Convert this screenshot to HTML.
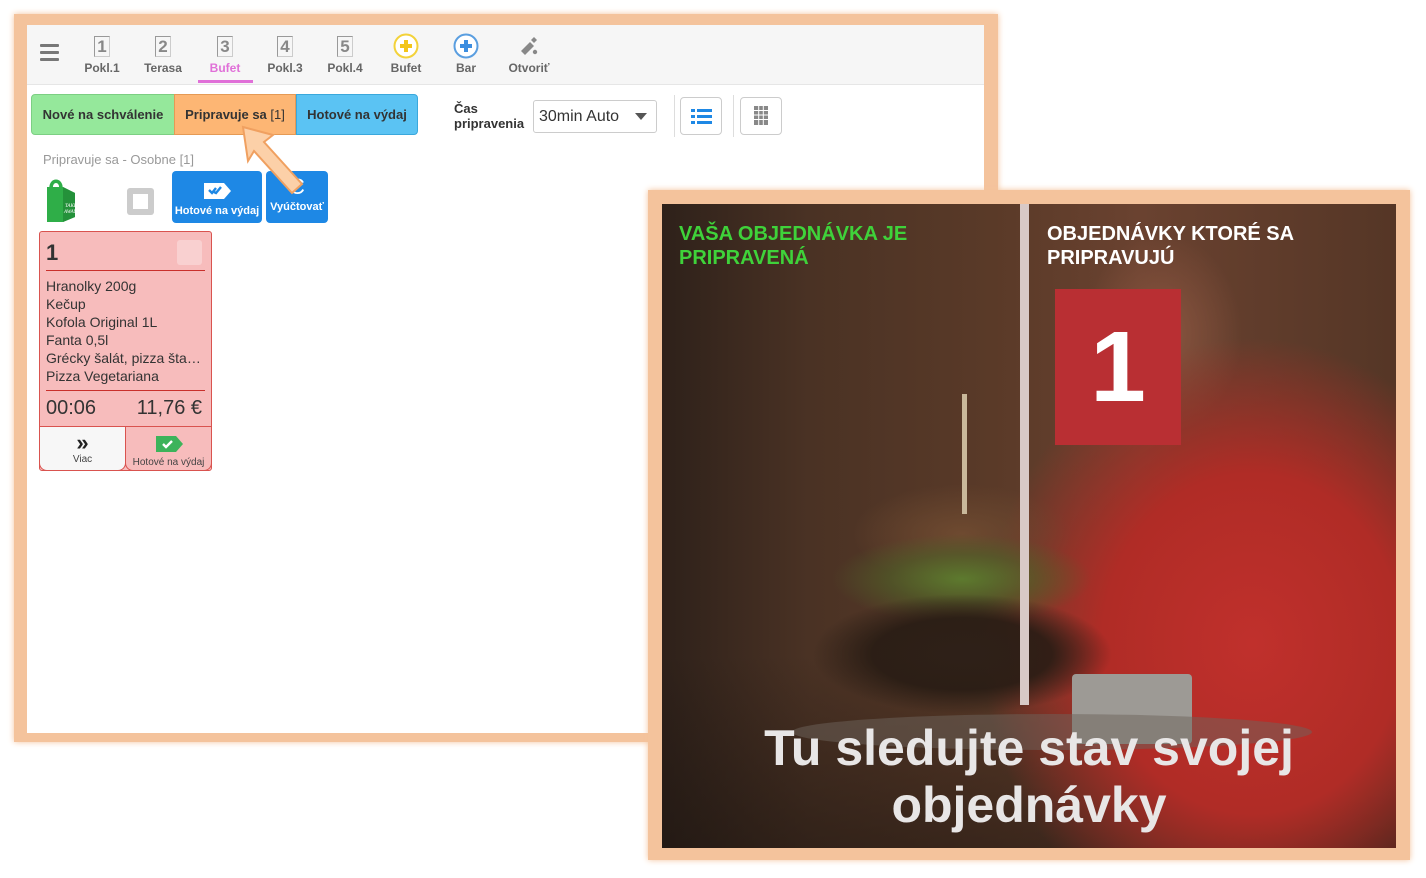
<!DOCTYPE html>
<html><head><meta charset="utf-8"><style>
*{box-sizing:border-box;margin:0;padding:0}
body{width:1426px;height:878px;background:#fff;position:relative;overflow:hidden;font-family:"Liberation Sans",Arial,sans-serif}
.frameL{position:absolute;left:14px;top:14px;width:984px;height:728px;background:#f4c39c;box-shadow:0 0 6px #f4c39c}
.app{position:absolute;left:27px;top:25px;width:957px;height:708px;background:#fff}
.topbar{position:absolute;left:0;top:0;width:957px;height:60px;background:#f6f6f6;border-bottom:1px solid #e6e6e6}
.ham{position:absolute;left:13px;top:19px;width:19px}
.ham i{display:block;height:3px;background:#777;margin-bottom:4px;border-radius:1px}
.tab{position:absolute;top:10px;width:60px;text-align:center;font-size:12px;color:#666;font-weight:bold}
.tab .ic{height:22px;display:flex;justify-content:center;align-items:center;margin-bottom:4px}
.num{font-size:17px;color:#888;border-left:1px solid #999;border-top:1px solid #999;border-right:1px solid #ccc;border-bottom:1px solid #ccc;width:16px;height:21px;line-height:20px;text-align:center;font-weight:bold}
.sel{color:#e070d8}
.uline{position:absolute;left:171px;top:55px;width:55px;height:3px;background:#e070d8}
.btn{position:absolute;top:69px;height:41px;line-height:40px;font-size:13px;color:#333;text-align:center;border:1px solid}
.b1{left:4px;width:144px;background:#95e89b;border-color:#7ccf83;border-radius:4px 0 0 4px;font-weight:bold}
.b2{left:147px;width:122px;background:#fdb674;border-color:#e59a55}
.b3{left:269px;width:122px;background:#5bc3f3;border-color:#3aa8dc;border-radius:0 4px 4px 0;font-weight:bold}
.cas{position:absolute;left:427px;top:76px;font-size:13px;color:#333;line-height:15px;font-weight:bold}
.selbox{position:absolute;left:506px;top:75px;width:124px;height:33px;border:1px solid #ccc;border-radius:3px;font-size:16px;color:#333;line-height:31px;padding-left:5px;background:#fff}
.selbox:after{content:"";position:absolute;right:9px;top:12px;border:6px solid transparent;border-top:7px solid #555}
.vsep{position:absolute;top:70px;width:1px;height:42px;background:#ddd}
.ibtn{position:absolute;top:72px;width:42px;height:38px;border:1px solid #ccc;border-radius:4px;background:#fff}
.sub{position:absolute;left:16px;top:127px;font-size:13px;color:#999}
.bluebtn{position:absolute;top:146px;height:52px;background:#1e88e5;border-radius:4px;color:#fff;font-size:11px;font-weight:bold;text-align:center}
.card{position:absolute;left:12px;top:206px;width:173px;height:240px;background:#f7bcbc;border:1px solid #d9534f;border-radius:3px}
.card .n{position:absolute;left:6px;top:8px;font-size:22px;color:#333;font-weight:bold}
.card .chk{position:absolute;right:9px;top:8px;width:25px;height:25px;background:#f9d0d0;border-radius:3px}
.card .hr{position:absolute;left:6px;right:6px;height:1px;background:#c9302c}
.items{position:absolute;left:6px;top:45px;font-size:14px;color:#333;line-height:18px}
.time{position:absolute;left:6px;top:165px;font-size:20px;color:#333}
.price{position:absolute;right:9px;top:165px;font-size:20px;color:#333}
.foot{position:absolute;top:194px;height:45px;border:1px solid #d9534f;border-radius:0 0 8px 8px;font-size:10px;color:#444;text-align:center}
.frameR{position:absolute;left:648px;top:190px;width:762px;height:670px;background:#f4c39c;box-shadow:0 0 6px #f4c39c}
.photo{position:absolute;left:662px;top:204px;width:734px;height:644px;overflow:hidden;
background:
radial-gradient(ellipse 150px 60px at 300px 450px,#2e2018 0%,rgba(40,28,20,.9) 60%,rgba(0,0,0,0) 100%),
radial-gradient(ellipse 130px 45px at 300px 375px,#5d7a2e 0%,rgba(80,100,40,.6) 55%,rgba(0,0,0,0) 100%),
radial-gradient(ellipse 110px 50px at 300px 330px,#6e4a30 0%,rgba(0,0,0,0) 100%),
radial-gradient(ellipse 300px 340px at 590px 440px,#c0302c 0%,#b02c26 50%,rgba(140,40,30,0) 90%),
radial-gradient(ellipse 80px 100px at 500px 130px,#8a5540 0%,rgba(0,0,0,0) 100%),
linear-gradient(180deg,rgba(0,0,0,0) 70%,rgba(25,18,14,.5) 100%),
linear-gradient(90deg,#2e211a 0%,#4a3224 20%,#5a3a28 45%,#6a4230 65%,#553626 100%)}
.divider{position:absolute;left:358px;top:0;width:9px;height:501px;background:#d8c9c6}
.h1{position:absolute;left:17px;top:18px;font-size:20px;font-weight:bold;color:#3fd23a;line-height:24px}
.h2{position:absolute;left:385px;top:18px;font-size:20px;font-weight:bold;color:#fff;line-height:24px}
.redbox{position:absolute;left:393px;top:85px;width:126px;height:156px;background:#b92f33;color:#fff;font-size:100px;font-weight:bold;text-align:center;line-height:156px}
.big{position:absolute;left:0;width:734px;top:516px;text-align:center;font-size:50px;font-weight:bold;color:#e8e6e6;line-height:57px}
</style></head><body>
<div class="frameL"></div>
<div class="app">
 <div class="topbar">
  <div class="ham"><i></i><i></i><i></i></div>
  <div class="tab" style="left:45px"><div class="ic"><div class="num">1</div></div>Pokl.1</div>
  <div class="tab" style="left:106px"><div class="ic"><div class="num">2</div></div>Terasa</div>
  <div class="tab sel" style="left:168px"><div class="ic"><div class="num">3</div></div>Bufet</div>
  <div class="tab" style="left:228px"><div class="ic"><div class="num">4</div></div>Pokl.3</div>
  <div class="tab" style="left:288px"><div class="ic"><div class="num">5</div></div>Pokl.4</div>
  <div class="tab" style="left:349px"><div class="ic"><svg width="26" height="26"><circle cx="13" cy="13" r="11.5" fill="#fff" stroke="#f3d23a" stroke-width="2"/><path d="M13 7v12M7 13h12" stroke="#f3c51a" stroke-width="4"/></svg></div>Bufet</div>
  <div class="tab" style="left:409px"><div class="ic"><svg width="26" height="26"><circle cx="13" cy="13" r="11.5" fill="#fff" stroke="#5a9ee0" stroke-width="2"/><path d="M13 7v12M7 13h12" stroke="#3d8ee0" stroke-width="4"/></svg></div>Bar</div>
  <div class="tab" style="left:472px"><div class="ic"><svg width="24" height="22"><path d="M4 16l9-9 4 4-9 9z" fill="#888"/><path d="M14 5l3-3 3 3-3 3z" fill="#888"/><circle cx="18" cy="17" r="2.2" fill="#888"/></svg></div>Otvoriť</div>
  <div class="uline"></div>
 </div>
 <div class="btn b1">Nové na schválenie</div>
 <div class="btn b2" style="font-weight:bold">Pripravuje sa <span style="font-weight:normal">[1]</span></div>
 <div class="btn b3">Hotové na výdaj</div>
 <div class="cas">Čas<br>pripravenia</div>
 <div class="selbox">30min Auto</div>
 <div class="vsep" style="left:647px"></div>
 <div class="ibtn" style="left:653px"><svg width="40" height="36"><g fill="#1e88e5"><rect x="10" y="11" width="4" height="3"/><rect x="16" y="11" width="15" height="3"/><rect x="10" y="17" width="4" height="3"/><rect x="16" y="17" width="15" height="3"/><rect x="10" y="23" width="4" height="3"/><rect x="16" y="23" width="15" height="3"/></g></svg></div>
 <div class="vsep" style="left:706px"></div>
 <div class="ibtn" style="left:713px"><svg width="40" height="36"><rect x="13" y="8" width="14" height="19" fill="#888"/><g stroke="#fff" stroke-width="1"><path d="M13 12.5h14M13 17h14M13 21.5h14M17.7 8v19M22.3 8v19"/></g></svg></div>
 <div class="sub">Pripravuje sa - Osobne [1]</div>
 <svg style="position:absolute;left:14px;top:152px" width="44" height="48" viewBox="0 0 44 48"><path d="M6 10h16l12 6v24l-12 5H6z" fill="#2fae48"/><path d="M22 10l12 6v24l-12 5z" fill="#24913a"/><path d="M10 11c0-9 10-9 10 0" stroke="#2fae48" stroke-width="3.5" fill="none"/><text x="24" y="30" font-size="5" fill="#fff" font-style="italic" font-family="Liberation Serif">TAKE</text><text x="23" y="36" font-size="5" fill="#fff" font-style="italic" font-family="Liberation Serif">AWAY</text></svg>
 <div style="position:absolute;left:100px;top:163px;width:27px;height:27px;background:#ccc;border-radius:3px"><div style="position:absolute;left:6px;top:6px;width:15px;height:15px;background:#fff"></div></div>
 <div class="bluebtn" style="left:145px;width:90px"><svg width="30" height="20" style="margin-top:10px"><path d="M2 2h20l7 8-7 8H2z" fill="#fff"/><path d="M7 9l3 3 4-5M12 11l2 1 5-6" stroke="#1e88e5" stroke-width="2.4" fill="none"/></svg><div style="margin-top:1px">Hotové na výdaj</div></div>
 <div class="bluebtn" style="left:239px;width:62px"><div style="font-size:22px;margin-top:3px;font-weight:normal;height:27px">C</div><div>Vyúčtovať</div></div>
 <svg style="position:absolute;left:212px;top:98px" width="70" height="80"><path d="M4 4l30 8-9 7 38 42-10 9-38-42-6 10z" fill="#fcd0a8" stroke="#f0a060" stroke-width="2"/></svg>
 <div class="card">
  <div class="n">1</div><div class="chk"></div>
  <div class="hr" style="top:38px"></div>
  <div class="items">Hranolky 200g<br>Kečup<br>Kofola Original 1L<br>Fanta 0,5l<br>Grécky šalát, pizza šta…<br>Pizza Vegetariana</div>
  <div class="hr" style="top:158px"></div>
  <div class="time">00:06</div><div class="price">11,76 €</div>
  <div class="foot" style="left:-1px;width:87px;background:#f7f7f7"><div style="font-size:22px;font-weight:bold;line-height:22px;margin-top:5px;color:#222">»</div>Viac</div>
  <div class="foot" style="left:85px;width:87px;background:#f7bcbc"><svg width="30" height="20" style="margin-top:7px"><path d="M2 2h20l7 8-7 8H2z" fill="#3db35a"/><path d="M9 10l3 3 6-6" stroke="#fff" stroke-width="2.4" fill="none"/></svg><div>Hotové na výdaj</div></div>
 </div>
</div>
<div class="frameR"></div>
<div class="photo">
 <div style="position:absolute;left:300px;top:190px;width:5px;height:120px;background:#c9b89a"></div>
 <div style="position:absolute;left:410px;top:470px;width:120px;height:70px;background:#9d9a95;border-radius:4px"></div>
 <div style="position:absolute;left:130px;top:510px;width:520px;height:36px;background:rgba(110,100,92,.5);border-radius:50%"></div>
 <div class="divider"></div>
 <div class="h1">VAŠA OBJEDNÁVKA JE<br>PRIPRAVENÁ</div>
 <div class="h2">OBJEDNÁVKY KTORÉ SA<br>PRIPRAVUJÚ</div>
 <div class="redbox">1</div>
 <div class="big">Tu sledujte stav svojej<br>objednávky</div>
</div>
</body></html>
